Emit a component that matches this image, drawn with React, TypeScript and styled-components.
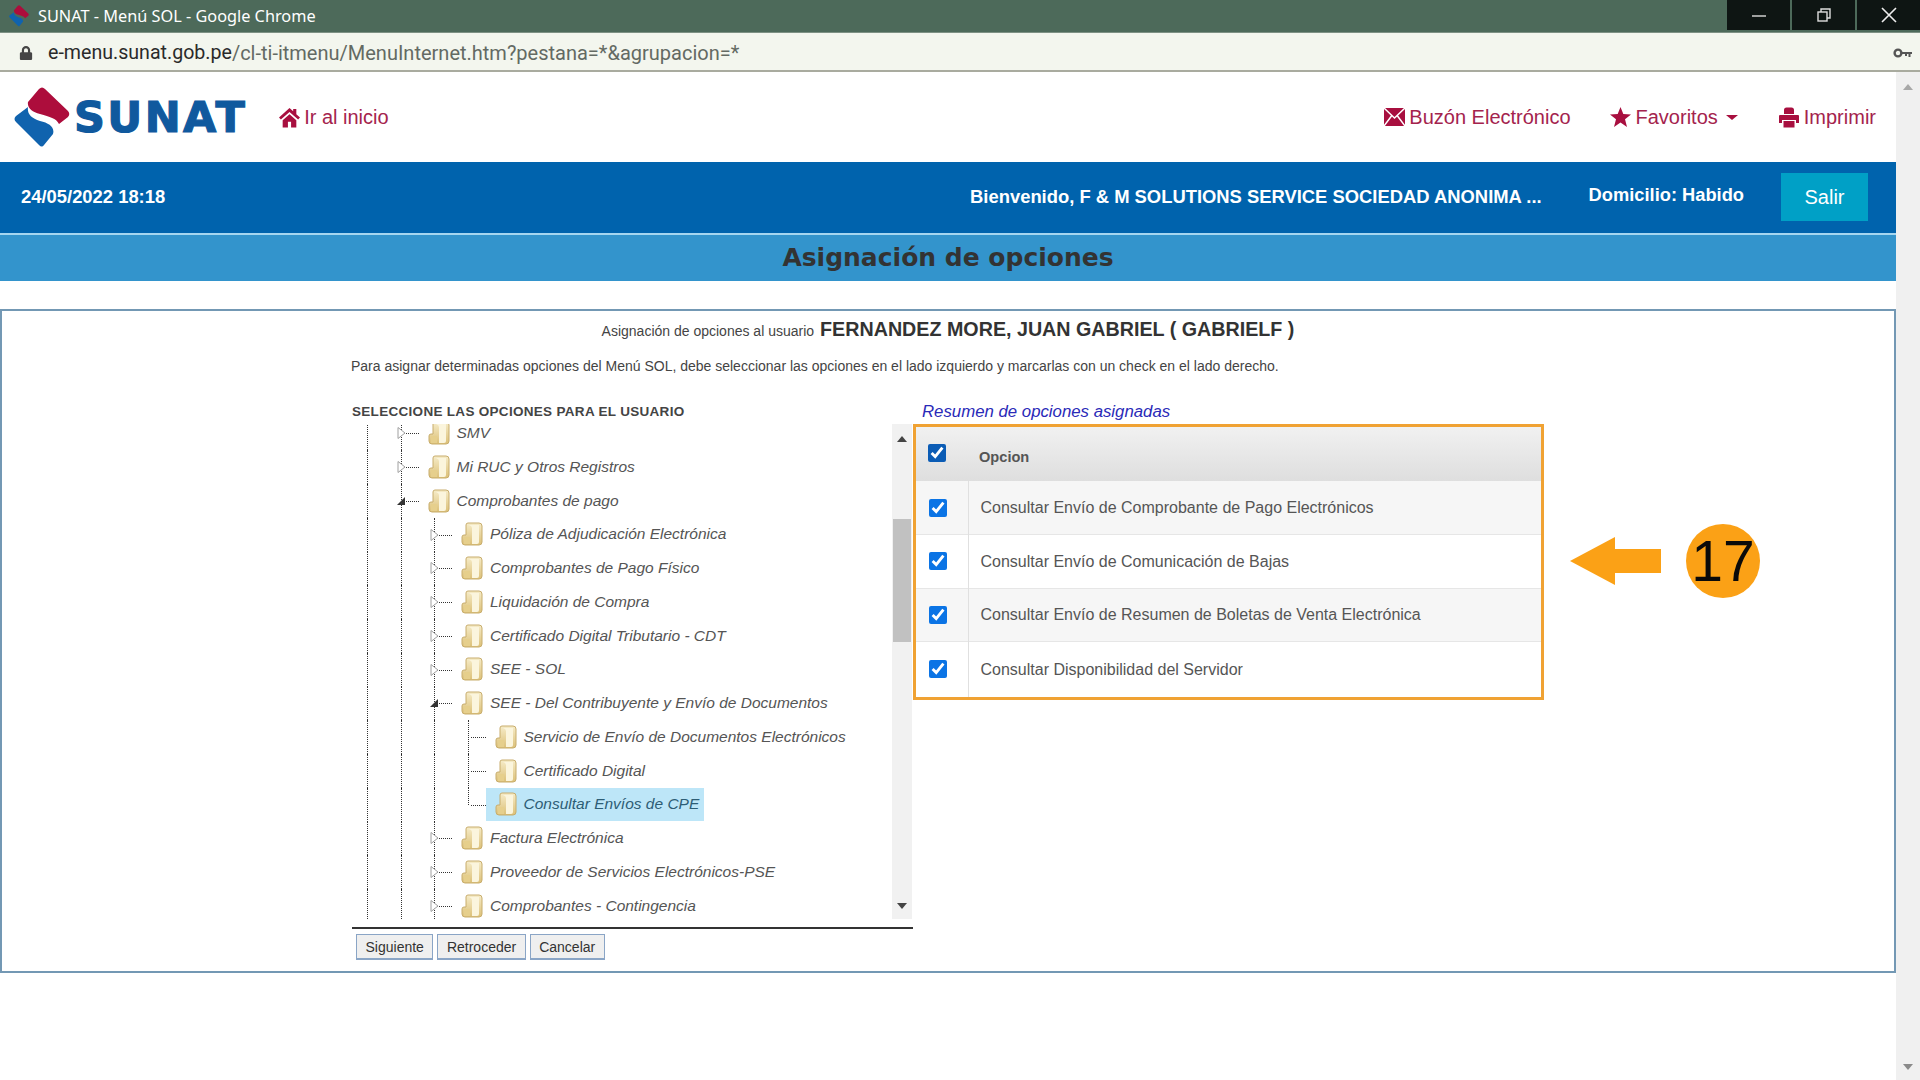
import React from "react";
import styled, { createGlobalStyle } from "styled-components";
import { FaLock } from "react-icons/fa";

const GlobalStyle = createGlobalStyle`
  html, body {
    margin: 0;
    padding: 0;
    height: 100%;
    background: #fff;
    overflow: hidden;
  }
  * {
    box-sizing: border-box;
  }
`;

const Screen = styled.div`
  width: 1920px;
  height: 1080px;
  display: flex;
  flex-direction: column;
  overflow: hidden;
  font-family: "Liberation Sans", Arial, sans-serif;
`;

const TitleBar = styled.div`
  height: 33px;
  flex: none;
  background: #4d6a5a;
  display: flex;
  align-items: center;
  padding-left: 9px;
  border-bottom: 1px solid #7d9184;
`;

const WindowTitle = styled.span`
  font-family: "Noto Sans", sans-serif;
  font-size: 16.3px;
  line-height: 32px;
  color: #fff;
  margin-left: 9px;
`;

const WindowButtons = styled.div`
  margin-left: auto;
  align-self: flex-start;
  display: flex;
  gap: 2px;
  height: 30px;
`;

const WindowButton = styled.div`
  width: 63px;
  height: 30px;
  background: #0e1513;
  display: flex;
  align-items: center;
  justify-content: center;
`;

const AddressBar = styled.div`
  height: 39px;
  flex: none;
  background: #f3f6ee;
  border-bottom: 2px solid #a9ab9f;
  display: flex;
  align-items: center;
  padding: 2px 7px 0 19px;
`;

const LockGlyph = styled(FaLock)`
  font-size: 14px;
  color: #454545;
`;

const UrlHost = styled.span`
  font-family: Roboto, sans-serif;
  font-size: 19.6px;
  color: #2a2a2a;
  margin-left: 15px;
`;

const UrlPath = styled.span`
  font-family: Roboto, sans-serif;
  font-size: 20px;
  color: #636a63;
`;

const KeyBox = styled.span`
  margin-left: auto;
  display: flex;
`;

const Viewport = styled.div`
  flex: 1;
  display: flex;
  min-height: 0;
`;

const Page = styled.div`
  width: 1896px;
  flex: none;
  background: #fff;
  display: flex;
  flex-direction: column;
`;

const PageScrollbar = styled.div`
  width: 24px;
  flex: none;
  background: #f0f0f0;
  display: flex;
  flex-direction: column;
  align-items: center;
  justify-content: space-between;
  padding: 12px 0 10px;
`;

const Arrow = styled.span<{ $down?: boolean; $color: string }>`
  width: 0;
  height: 0;
  border-left: 5px solid transparent;
  border-right: 5px solid transparent;
  ${(p) => (p.$down ? "border-top" : "border-bottom")}: 6px solid ${(p) => p.$color};
`;

const Header = styled.header`
  height: 90px;
  flex: none;
  display: flex;
  align-items: center;
  padding: 0 20px 0 14px;
`;

const LogoMark = styled.svg`
  width: 56px;
  height: 61px;
  flex: none;
`;

const LogoText = styled.span`
  font-family: "DejaVu Sans", sans-serif;
  font-weight: bold;
  font-size: 43px;
  line-height: 1;
  letter-spacing: 2.4px;
  color: #10599e;
  -webkit-text-stroke: 1.2px #10599e;
  margin-left: 4px;
`;

const HeaderLink = styled.a<{ $gap?: number }>`
  display: flex;
  align-items: center;
  gap: ${(p) => p.$gap ?? 4}px;
  color: #a4234d;
  font-size: 20px;
  white-space: nowrap;

  svg {
    fill: #a80f3f;
    flex: none;
  }
`;

const HomeLink = styled(HeaderLink)`
  margin-left: 32px;
`;

const HeaderRight = styled.nav`
  margin-left: auto;
  display: flex;
  align-items: center;
  gap: 39px;
`;

const Caret = styled.span`
  width: 0;
  height: 0;
  margin: 0 2px 0 3px;
  border-left: 6px solid transparent;
  border-right: 6px solid transparent;
  border-top: 5px solid #a80f3f;
`;

const UserBar = styled.div`
  height: 71px;
  flex: none;
  background: #0063ad;
  display: flex;
  align-items: center;
  padding: 0 28px 0 21px;
  color: #fff;
  font-weight: bold;
  font-size: 18.4px;
`;

const DateText = styled.span`
  margin-bottom: 2px;
`;

const Welcome = styled.span`
  margin: 0 0 2px auto;
  font-size: 18.4px;
  white-space: nowrap;
`;

const Domicile = styled.span`
  margin: 0 0 5px 47px;
  font-size: 18.3px;
`;

const LogoutButton = styled.div`
  width: 87px;
  height: 48px;
  margin: 0 0 1px 37px;
  background: #00a0c6;
  font-weight: normal;
  font-size: 20px;
  display: flex;
  align-items: center;
  justify-content: center;
`;

const SectionBar = styled.div`
  height: 48px;
  flex: none;
  background: #3394cc;
  border-top: 2px solid #a5d6f0;
  padding-bottom: 2px;
  display: flex;
  align-items: center;
  justify-content: center;
  font-family: "DejaVu Sans", sans-serif;
  font-weight: bold;
  font-size: 25px;
  color: #333;
`;

const Panel = styled.section`
  height: 664px;
  margin-top: 28px;
  flex: none;
  border: 2px solid #7398b4;
  display: flex;
  flex-direction: column;
  padding: 1px 0 0 349px;
`;

const IntroLine = styled.div`
  height: 34px;
  margin-left: -349px;
  display: flex;
  align-items: baseline;
  justify-content: center;
  gap: 6px;
  line-height: 34px;
  font-size: 14px;
  color: #444;
`;

const UserName = styled.b`
  font-size: 19.7px;
  color: #333;
`;

const HelpLine = styled.div`
  height: 20px;
  margin-top: 10px;
  font-size: 14px;
  line-height: 20px;
  color: #444;
  white-space: nowrap;
`;

const Columns = styled.div`
  display: flex;
  margin: 23px 0 0 1px;
`;

const LeftColumn = styled.div`
  width: 561px;
  flex: none;
`;

const TreeHeading = styled.div`
  height: 25px;
  font-weight: bold;
  font-size: 13.5px;
  line-height: 26px;
  color: #444;
  letter-spacing: 0.3px;
`;

const TreeBox = styled.div`
  height: 495px;
  display: flex;
  overflow: hidden;
`;

const TreeList = styled.ul`
  width: 540px;
  flex: none;
  margin: -7.5px 0 0;
  padding: 0 0 0 15px;
  list-style: none;
`;

const TreeRow = styled.li`
  height: 33.75px;
  display: flex;
`;

const Guide = styled.span`
  width: 33.5px;
  flex: none;
  border-left: 1px dotted #333;
`;

const Connector = styled.span<{ $last?: boolean }>`
  position: relative;
  width: 18px;
  flex: none;

  &::before {
    content: "";
    position: absolute;
    left: 0;
    top: 0;
    bottom: ${(p) => (p.$last ? "50%" : "0")};
    border-left: 1px dotted #333;
  }

  &::after {
    content: "";
    position: absolute;
    left: 3px;
    right: 0;
    top: 50%;
    border-top: 1px dotted #333;
  }
`;

const Expander = styled.svg`
  position: absolute;
  z-index: 1;
  left: -5px;
  top: 50%;
  margin-top: -6px;
  width: 11px;
  height: 12px;
`;

const NodeLabel = styled.span<{ $selected?: boolean }>`
  height: 33px;
  display: flex;
  align-items: center;
  gap: 7px;
  padding: 0 5px 0 9px;
  font-style: italic;
  font-size: 15.5px;
  white-space: nowrap;
  color: ${(p) => (p.$selected ? "#2d5d75" : "#555")};
  background: ${(p) => (p.$selected ? "#bde6f8" : "transparent")};
`;

const FolderIcon = styled.svg`
  width: 22px;
  height: 24px;
  flex: none;
`;

const TreeScrollbar = styled.div`
  width: 20px;
  flex: none;
  background: #f1f1f1;
  display: flex;
  flex-direction: column;
  align-items: center;
  padding: 12px 0 10px;
`;

const ScrollThumb = styled.div`
  width: 18px;
  height: 123px;
  margin-top: 77px;
  margin-bottom: auto;
  background: #c1c1c1;
`;

const TreeFooter = styled.div`
  margin-top: 8px;
  border-top: 2px solid #333;
  display: flex;
  gap: 4px;
  padding: 5px 0 0 4px;
`;

const FormButton = styled.button`
  height: 26px;
  padding: 0 8.5px;
  background: #efefef;
  border: 1px solid #8aa5c6;
  border-bottom-width: 2px;
  border-radius: 0;
  font-family: "Liberation Sans", sans-serif;
  font-size: 14px;
  color: #333;
`;

const RightColumn = styled.div`
  width: 631px;
  flex: none;
`;

const SummaryHeading = styled.div`
  height: 25px;
  padding-left: 9px;
  font-style: italic;
  font-size: 16.8px;
  line-height: 26px;
  color: #2a2ab8;
`;

const SummaryFrame = styled.div`
  border: 3px solid #f0a233;
`;

const SummaryTable = styled.table`
  width: 100%;
  border-collapse: collapse;
  table-layout: fixed;
  font-size: 16px;
  color: #555;
`;

const CheckCol = styled.col`
  width: 52px;
`;

const HeadCell = styled.th`
  height: 54px;
  padding: 6px 0 0 11px;
  text-align: left;
  font-size: 14.6px;
  color: #555;
  background: linear-gradient(#f1f1f1, #dedede);
`;

const CheckHeadCell = styled(HeadCell)`
  padding: 0 0 3px 12px;
`;

const Row = styled.tr<{ $shaded: boolean }>`
  height: 53.5px;
  background: ${(p) => (p.$shaded ? "#f6f6f6" : "#fff")};
  border-bottom: 1px solid #e6e6e6;

  &:last-child {
    height: 55px;
    border-bottom: 0;
  }
`;

const CheckCell = styled.td`
  padding: 0 0 0 13px;
  border-right: 1px solid #e0e0e0;
`;

const TextCell = styled.td`
  padding: 1px 0 0 12px;
`;

const Check = styled.input.attrs({ type: "checkbox", readOnly: true, checked: true })<{ $dark?: boolean }>`
  display: block;
  width: 18px;
  height: 18px;
  margin: 0;
  accent-color: ${(p) => (p.$dark ? "#0b5cb5" : "#0b74e5")};
`;

const Callout = styled.div`
  display: flex;
  align-items: center;
  gap: 25px;
  margin-left: 26px;
  margin-top: 125px;
  align-self: flex-start;
`;

const CalloutArrow = styled.svg`
  width: 91px;
  height: 48px;
  flex: none;
`;

const StepBadge = styled.div`
  width: 74px;
  height: 74px;
  border-radius: 50%;
  background: #fba116;
  display: flex;
  align-items: center;
  justify-content: center;
  font-size: 57px;
  color: #0a0a0a;
`;

const Logo = ({ size }: { size?: number }) => (
  <LogoMark viewBox="0 0 56 61" style={size ? { width: size, height: size * 1.09 } : undefined}>
    <path
      d="M25 2 Q28 -1 31 2 L54 24 Q56.500 27 54 30 L45 37 C42 31 36 30 26 27 C18 25 13 21 14 15 Z"
      fill="#ad0d3c"
    />
    <path
      d="M2 29 L14 20 C13 27 17 31 26 34 C35 36 41 40 39 47 L30 58 Q28 61 25 58 L2 35 Q-1 32 2 29 Z"
      fill="#1063ae"
    />
  </LogoMark>
);

const Folder = () => (
  <FolderIcon viewBox="0 0 22 24">
    <defs>
      <linearGradient id="folderFill" x1="0" y1="0" x2="0" y2="1">
        <stop offset="0" stopColor="#f6ecc9" />
        <stop offset="1" stopColor="#dcc077" />
      </linearGradient>
    </defs>
    <path d="M5 3 Q5 1 7 1 H18 Q21 1 21 4 V20 Q21 23 18 23 H4 Q1 23 1 20 V15 Q1 13 3 13 H5 Z" fill="url(#folderFill)" stroke="#c8ad6c" />
    <path d="M8 3 H18 V20 Q18 22 16 22 H11 V6 Q11 4 8 3 Z" fill="#fbf5dd" />
    <path d="M3 15 H9 V22 H3 Z" fill="#e6cf8c" />
  </FolderIcon>
);

const nodes: { label: string; level: number; open?: boolean; leaf?: boolean; last?: boolean; selected?: boolean }[] = [
  { label: "SMV", level: 1 },
  { label: "Mi RUC y Otros Registros", level: 1 },
  { label: "Comprobantes de pago", level: 1, open: true },
  { label: "Póliza de Adjudicación Electrónica", level: 2 },
  { label: "Comprobantes de Pago Físico", level: 2 },
  { label: "Liquidación de Compra", level: 2 },
  { label: "Certificado Digital Tributario - CDT", level: 2 },
  { label: "SEE - SOL", level: 2 },
  { label: "SEE - Del Contribuyente y Envío de Documentos", level: 2, open: true },
  { label: "Servicio de Envío de Documentos Electrónicos", level: 3, leaf: true },
  { label: "Certificado Digital", level: 3, leaf: true },
  { label: "Consultar Envíos de CPE", level: 3, leaf: true, last: true, selected: true },
  { label: "Factura Electrónica", level: 2 },
  { label: "Proveedor de Servicios Electrónicos-PSE", level: 2 },
  { label: "Comprobantes - Contingencia", level: 2 },
];

const options = [
  "Consultar Envío de Comprobante de Pago Electrónicos",
  "Consultar Envío de Comunicación de Bajas",
  "Consultar Envío de Resumen de Boletas de Venta Electrónica",
  "Consultar Disponibilidad del Servidor",
];

const App = () => (
  <Screen>
    <GlobalStyle />
    <TitleBar>
      <Logo size={20} />
      <WindowTitle>SUNAT - Menú SOL - Google Chrome</WindowTitle>
      <WindowButtons>
        <WindowButton>
          <svg width="14" height="14" viewBox="0 0 14 14">
            <path d="M0 8 H14" stroke="#ddd" strokeWidth="1.4" />
          </svg>
        </WindowButton>
        <WindowButton>
          <svg width="14" height="14" viewBox="0 0 14 14" fill="none" stroke="#ddd" strokeWidth="1.4">
            <rect x="1" y="4" width="9" height="9" />
            <path d="M4 4 V1 H13 V10 H10" />
          </svg>
        </WindowButton>
        <WindowButton>
          <svg width="16" height="16" viewBox="0 0 16 16" stroke="#eee" strokeWidth="1.6">
            <path d="M1 1 L15 15 M15 1 L1 15" />
          </svg>
        </WindowButton>
      </WindowButtons>
    </TitleBar>
    <AddressBar>
      <LockGlyph />
      <UrlHost>e-menu.sunat.gob.pe</UrlHost>
      <UrlPath>/cl-ti-itmenu/MenuInternet.htm?pestana=*&amp;agrupacion=*</UrlPath>
      <KeyBox>
        <svg width="20" height="12" viewBox="0 0 20 12" fill="none">
          <circle cx="5" cy="6" r="3.4" stroke="#555" strokeWidth="2.4" />
          <path d="M9 5 H19 V7 H17.500 V10 H15.500 V7 H14 V9 H12 V7 H9 Z" fill="#555" />
        </svg>
      </KeyBox>
    </AddressBar>
    <Viewport>
      <Page>
        <Header>
          <Logo />
          <LogoText>SUNAT</LogoText>
          <HomeLink $gap={4}>
            <svg width="21" height="21" viewBox="0 0 20 20">
              <path d="M10 1 L0 10 L1.800 12 L10 4.800 L18.200 12 L20 10 L16.500 6.800 V2 H13.500 V4 Z M3.500 12.500 L10 6.800 L16.500 12.500 V19.500 H11.500 V14 H8.500 V19.500 H3.500 Z" />
            </svg>
            Ir al inicio
          </HomeLink>
          <HeaderRight>
            <HeaderLink $gap={4}>
              <svg width="21" height="18" viewBox="0 0 21 18">
                <rect y="0" width="21" height="18" />
                <path d="M0 0 L10.500 10 L21 0 M0 18 L7.500 8 M21 18 L13.500 8" fill="none" stroke="#fff" strokeWidth="1.5" />
              </svg>
              Buzón Electrónico
            </HeaderLink>
            <HeaderLink $gap={5}>
              <svg width="21" height="20" viewBox="0 0 21 20">
                <path d="M10.500 0 L13.300 7 L21 7.400 L15 12.200 L17 20 L10.500 15.600 L4 20 L6 12.200 L0 7.400 L7.700 7 Z" />
              </svg>
              Favoritos
              <Caret />
            </HeaderLink>
            <HeaderLink $gap={5}>
              <svg width="20" height="21" viewBox="0 0 20 21">
                <path d="M5 3 Q5 0.500 7.500 0.500 H12.500 Q15 0.500 15 3 V7 H5 Z M1 8 H19 Q20 8 20 9 V16 H17 V13 H3 V16 H0 V9 Q0 8 1 8 Z M4.500 14 H15.500 V20.500 H4.500 Z" />
              </svg>
              Imprimir
            </HeaderLink>
          </HeaderRight>
        </Header>
        <UserBar>
          <DateText>24/05/2022 18:18</DateText>
          <Welcome>Bienvenido, F &amp; M SOLUTIONS SERVICE SOCIEDAD ANONIMA ...</Welcome>
          <Domicile>Domicilio: Habido</Domicile>
          <LogoutButton>Salir</LogoutButton>
        </UserBar>
        <SectionBar>Asignación de opciones</SectionBar>
        <Panel>
          <IntroLine>
            Asignación de opciones al usuario
            <UserName>FERNANDEZ MORE, JUAN GABRIEL ( GABRIELF )</UserName>
          </IntroLine>
          <HelpLine>
            Para asignar determinadas opciones del Menú SOL, debe seleccionar las opciones en el lado izquierdo y marcarlas con un check en el lado derecho.
          </HelpLine>
          <Columns>
            <LeftColumn>
              <TreeHeading>SELECCIONE LAS OPCIONES PARA EL USUARIO</TreeHeading>
              <TreeBox>
                <TreeList>
                  {nodes.map((node) => (
                    <TreeRow key={node.label}>
                      {Array.from({ length: node.level }, (_, i) => (
                        <Guide key={i} />
                      ))}
                      <Connector $last={node.last}>
                        {!node.leaf && (
                          <Expander viewBox="0 0 11 12">
                            {node.open ? (
                              <path d="M1 10 L9 2 V10 Z" fill="#333" />
                            ) : (
                              <path d="M2 0.500 L9 6 L2 11.500 Z" fill="#fff" stroke="#a0a0a0" />
                            )}
                          </Expander>
                        )}
                      </Connector>
                      <NodeLabel $selected={node.selected}>
                        <Folder />
                        {node.label}
                      </NodeLabel>
                    </TreeRow>
                  ))}
                </TreeList>
                <TreeScrollbar>
                  <Arrow $color="#444" />
                  <ScrollThumb />
                  <Arrow $down $color="#444" />
                </TreeScrollbar>
              </TreeBox>
              <TreeFooter>
                <FormButton>Siguiente</FormButton>
                <FormButton>Retroceder</FormButton>
                <FormButton>Cancelar</FormButton>
              </TreeFooter>
            </LeftColumn>
            <RightColumn>
              <SummaryHeading>Resumen de opciones asignadas</SummaryHeading>
              <SummaryFrame>
                <SummaryTable>
                  <colgroup>
                    <CheckCol />
                    <col />
                  </colgroup>
                  <thead>
                    <tr>
                      <CheckHeadCell>
                        <Check $dark />
                      </CheckHeadCell>
                      <HeadCell>Opcion</HeadCell>
                    </tr>
                  </thead>
                  <tbody>
                    {options.map((option, i) => (
                      <Row key={option} $shaded={i % 2 === 0}>
                        <CheckCell>
                          <Check />
                        </CheckCell>
                        <TextCell>{option}</TextCell>
                      </Row>
                    ))}
                  </tbody>
                </SummaryTable>
              </SummaryFrame>
            </RightColumn>
            <Callout>
              <CalloutArrow viewBox="0 0 91 48">
                <path d="M0 24 L45 0 V12 H91 V36 H45 V48 Z" fill="#fba116" />
              </CalloutArrow>
              <StepBadge>17</StepBadge>
            </Callout>
          </Columns>
        </Panel>
      </Page>
      <PageScrollbar>
        <Arrow $color="#a8a8a8" />
        <Arrow $down $color="#8a8a8a" />
      </PageScrollbar>
    </Viewport>
  </Screen>
);

export default App;
